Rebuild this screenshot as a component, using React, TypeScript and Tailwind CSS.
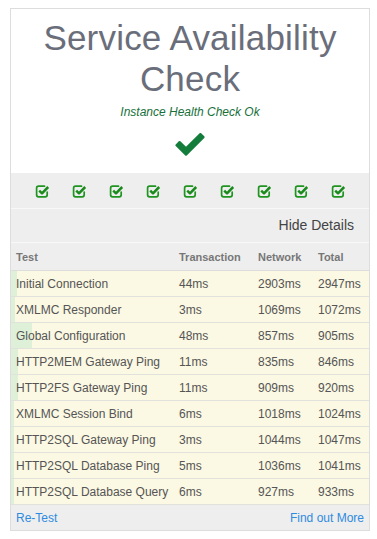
import React from "react";

const rows: [string, string, string, string, number][] = [
  ["Initial Connection", "44ms", "2903ms", "2947ms", 6],
  ["XMLMC Responder", "3ms", "1069ms", "1072ms", 4],
  ["Global Configuration", "48ms", "857ms", "905ms", 21],
  ["HTTP2MEM Gateway Ping", "11ms", "835ms", "846ms", 7],
  ["HTTP2FS Gateway Ping", "11ms", "909ms", "920ms", 7],
  ["XMLMC Session Bind", "6ms", "1018ms", "1024ms", 3],
  ["HTTP2SQL Gateway Ping", "3ms", "1044ms", "1047ms", 3],
  ["HTTP2SQL Database Ping", "5ms", "1036ms", "1041ms", 3],
  ["HTTP2SQL Database Query", "6ms", "927ms", "933ms", 3],
];

function CheckSquare() {
  return (
    <svg width="15" height="14" viewBox="0 0 15 14" fill="none" className="shrink-0">
      <path
        d="M9.5 2.2H3.6C2.4 2.2 1.6 3 1.6 4.2V10.8C1.6 12 2.4 12.8 3.6 12.8H10.2C11.4 12.8 12.2 12 12.2 10.8V8"
        stroke="#1f9421"
        strokeWidth="1.7"
        strokeLinecap="round"
      />
      <path d="M4.2 6.6L7 9.3L13.2 3" stroke="#1a8a1c" strokeWidth="2.5" strokeLinejoin="round" />
    </svg>
  );
}

export default function App() {
  return (
    <div
      className="pt-2 pl-[10px] w-[377px] h-[539px] bg-white"
      style={{ fontFamily: '"Liberation Sans", Arial, Helvetica, sans-serif' }}
    >
      <div className="w-[360px] border border-[#dddddd] bg-[#eeeeee]">
        <div className="bg-white flex flex-col items-center pt-[8px] h-[164px]">
          <div className="shrink-0 text-[35px] leading-[41px] text-[#696e7a] text-center tracking-[0.2px]">
            Service Availability
            <br />
            Check
          </div>
          <div className="shrink-0 italic text-[12px] leading-[16px] text-[#17703a] mt-[5px]">
            Instance Health Check Ok
          </div>
          <svg className="shrink-0 mt-[13px] w-[32px] h-[23px]" width="32" height="23" viewBox="0 0 32 23">
            <path
              d="M2.5 12.2L5.6 9.1L12 15.4L26.4 1L29.5 4.1L12 21.6Z"
              fill="#147d3c"
              stroke="#147d3c"
              strokeWidth="2.2"
              strokeLinejoin="round"
            />
          </svg>
        </div>
        <div className="h-[36px] flex items-center justify-center gap-[22px] border-b border-[#f8f8f8] pl-[1px]">
          {Array.from({ length: 9 }).map((_, i) => (
            <CheckSquare key={i} />
          ))}
        </div>
        <div className="h-[34px] flex items-center justify-end pr-[15px] text-[14px] text-[#444444] border-b border-[#f8f8f8]">
          Hide Details
        </div>
        <div className="h-[28px] grid grid-cols-[163px_79px_60px_1fr] items-center pl-[5px] text-[11px] font-bold text-[#777777] border-b border-[#dddddd] pt-[2px]">
          <span>Test</span>
          <span>Transaction</span>
          <span>Network</span>
          <span>Total</span>
        </div>
        {rows.map(([name, t, n, tot, w], i) => (
          <div
            key={i}
            className="h-[26px] grid grid-cols-[163px_79px_60px_1fr] items-center pl-[5px] text-[12px] text-[#555555] border-b border-[#e2e2dc]"
            style={{ background: `linear-gradient(to right, #dff0d8 ${w}px, #fbf8e3 ${w}px)` }}
          >
            <span>{name}</span>
            <span>{t}</span>
            <span>{n}</span>
            <span>{tot}</span>
          </div>
        ))}
        <div className="h-[25px] flex items-center justify-between pl-[5px] pr-[5px] text-[12px] text-[#2f8be0]">
          <span>Re-Test</span>
          <span>Find out More</span>
        </div>
      </div>
    </div>
  );
}
